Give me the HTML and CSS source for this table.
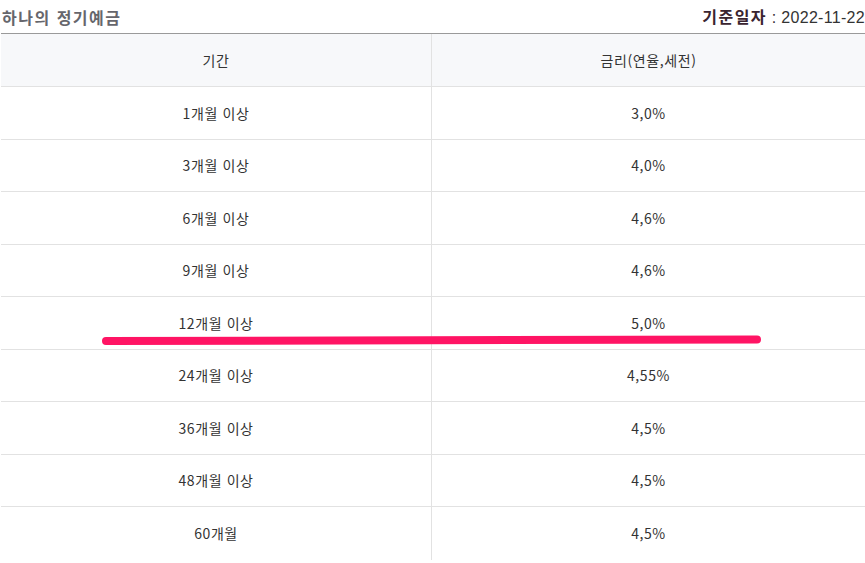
FILE: index.html
```html
<!DOCTYPE html>
<html lang="ko">
<head>
<meta charset="utf-8">
<link rel="stylesheet" href="styles.css">
</head>
<body>
<div class="page">
  <div class="titlebar">
    <h2 class="title">하나의 정기예금</h2>
    <div class="basedate"><b>기준일자</b> : 2022-11-22</div>
  </div>
  <div class="rates">
    <div class="row head"><div class="cell">기간</div><div class="cell">금리(연율,세전)</div></div>
    <div class="row"><div class="cell">1개월 이상</div><div class="cell">3,0%</div></div>
    <div class="row"><div class="cell">3개월 이상</div><div class="cell">4,0%</div></div>
    <div class="row"><div class="cell">6개월 이상</div><div class="cell">4,6%</div></div>
    <div class="row"><div class="cell">9개월 이상</div><div class="cell">4,6%</div></div>
    <div class="row"><div class="cell">12개월 이상</div><div class="cell">5,0%</div></div>
    <div class="row"><div class="cell">24개월 이상</div><div class="cell">4,55%</div></div>
    <div class="row"><div class="cell">36개월 이상</div><div class="cell">4,5%</div></div>
    <div class="row"><div class="cell">48개월 이상</div><div class="cell">4,5%</div></div>
    <div class="row"><div class="cell">60개월</div><div class="cell">4,5%</div></div>
    <svg class="mark" width="680" height="14" viewBox="0 0 680 14">
      <line x1="9" y1="9" x2="660" y2="7.5" stroke="#ff1464" stroke-width="8" stroke-linecap="round"/>
    </svg>
  </div>
</div>
</body>
</html>
```

FILE: styles.css
```css
html, body {
  margin: 0;
  padding: 0;
  background: #ffffff;
}
.page {
  width: 864px;
  padding-left: 1px;
  font-family: "Noto Sans CJK KR", "Noto Sans", sans-serif;
}
.titlebar {
  height: 33px;
  display: flex;
  justify-content: space-between;
  align-items: center;
  border-bottom: 1px solid #9a9a9a;
}
.title {
  margin: 0 0 0 1px;
  font-size: 16px;
  font-weight: 700;
  color: #66666c;
  letter-spacing: 1.5px;
  line-height: 20px;
}
.basedate {
  font-size: 16px;
  color: #333333;
  line-height: 20px;
  font-family: "Liberation Sans", "Noto Sans CJK KR", sans-serif;
  letter-spacing: 0.3px;
}
.basedate b {
  font-family: "Noto Sans CJK KR", sans-serif;
  color: #3a2430;
  letter-spacing: 1.5px;
}
.rates {
  position: relative;
}
.row {
  display: grid;
  grid-template-columns: 430px 1fr;
  height: 52.5px;
  box-sizing: border-box;
  border-bottom: 1px solid #e2e2e2;
}
.row.head {
  height: 53px;
  background: #f7f8fa;
}
.row:last-of-type {
  border-bottom: none;
}
.cell {
  display: flex;
  align-items: center;
  justify-content: center;
  font-size: 14px;
  color: #333333;
  letter-spacing: 0.6px;
}
.cell + .cell {
  border-left: 1px solid #e2e2e2;
}
.mark {
  position: absolute;
  left: 96px;
  top: 298px;
}
```
